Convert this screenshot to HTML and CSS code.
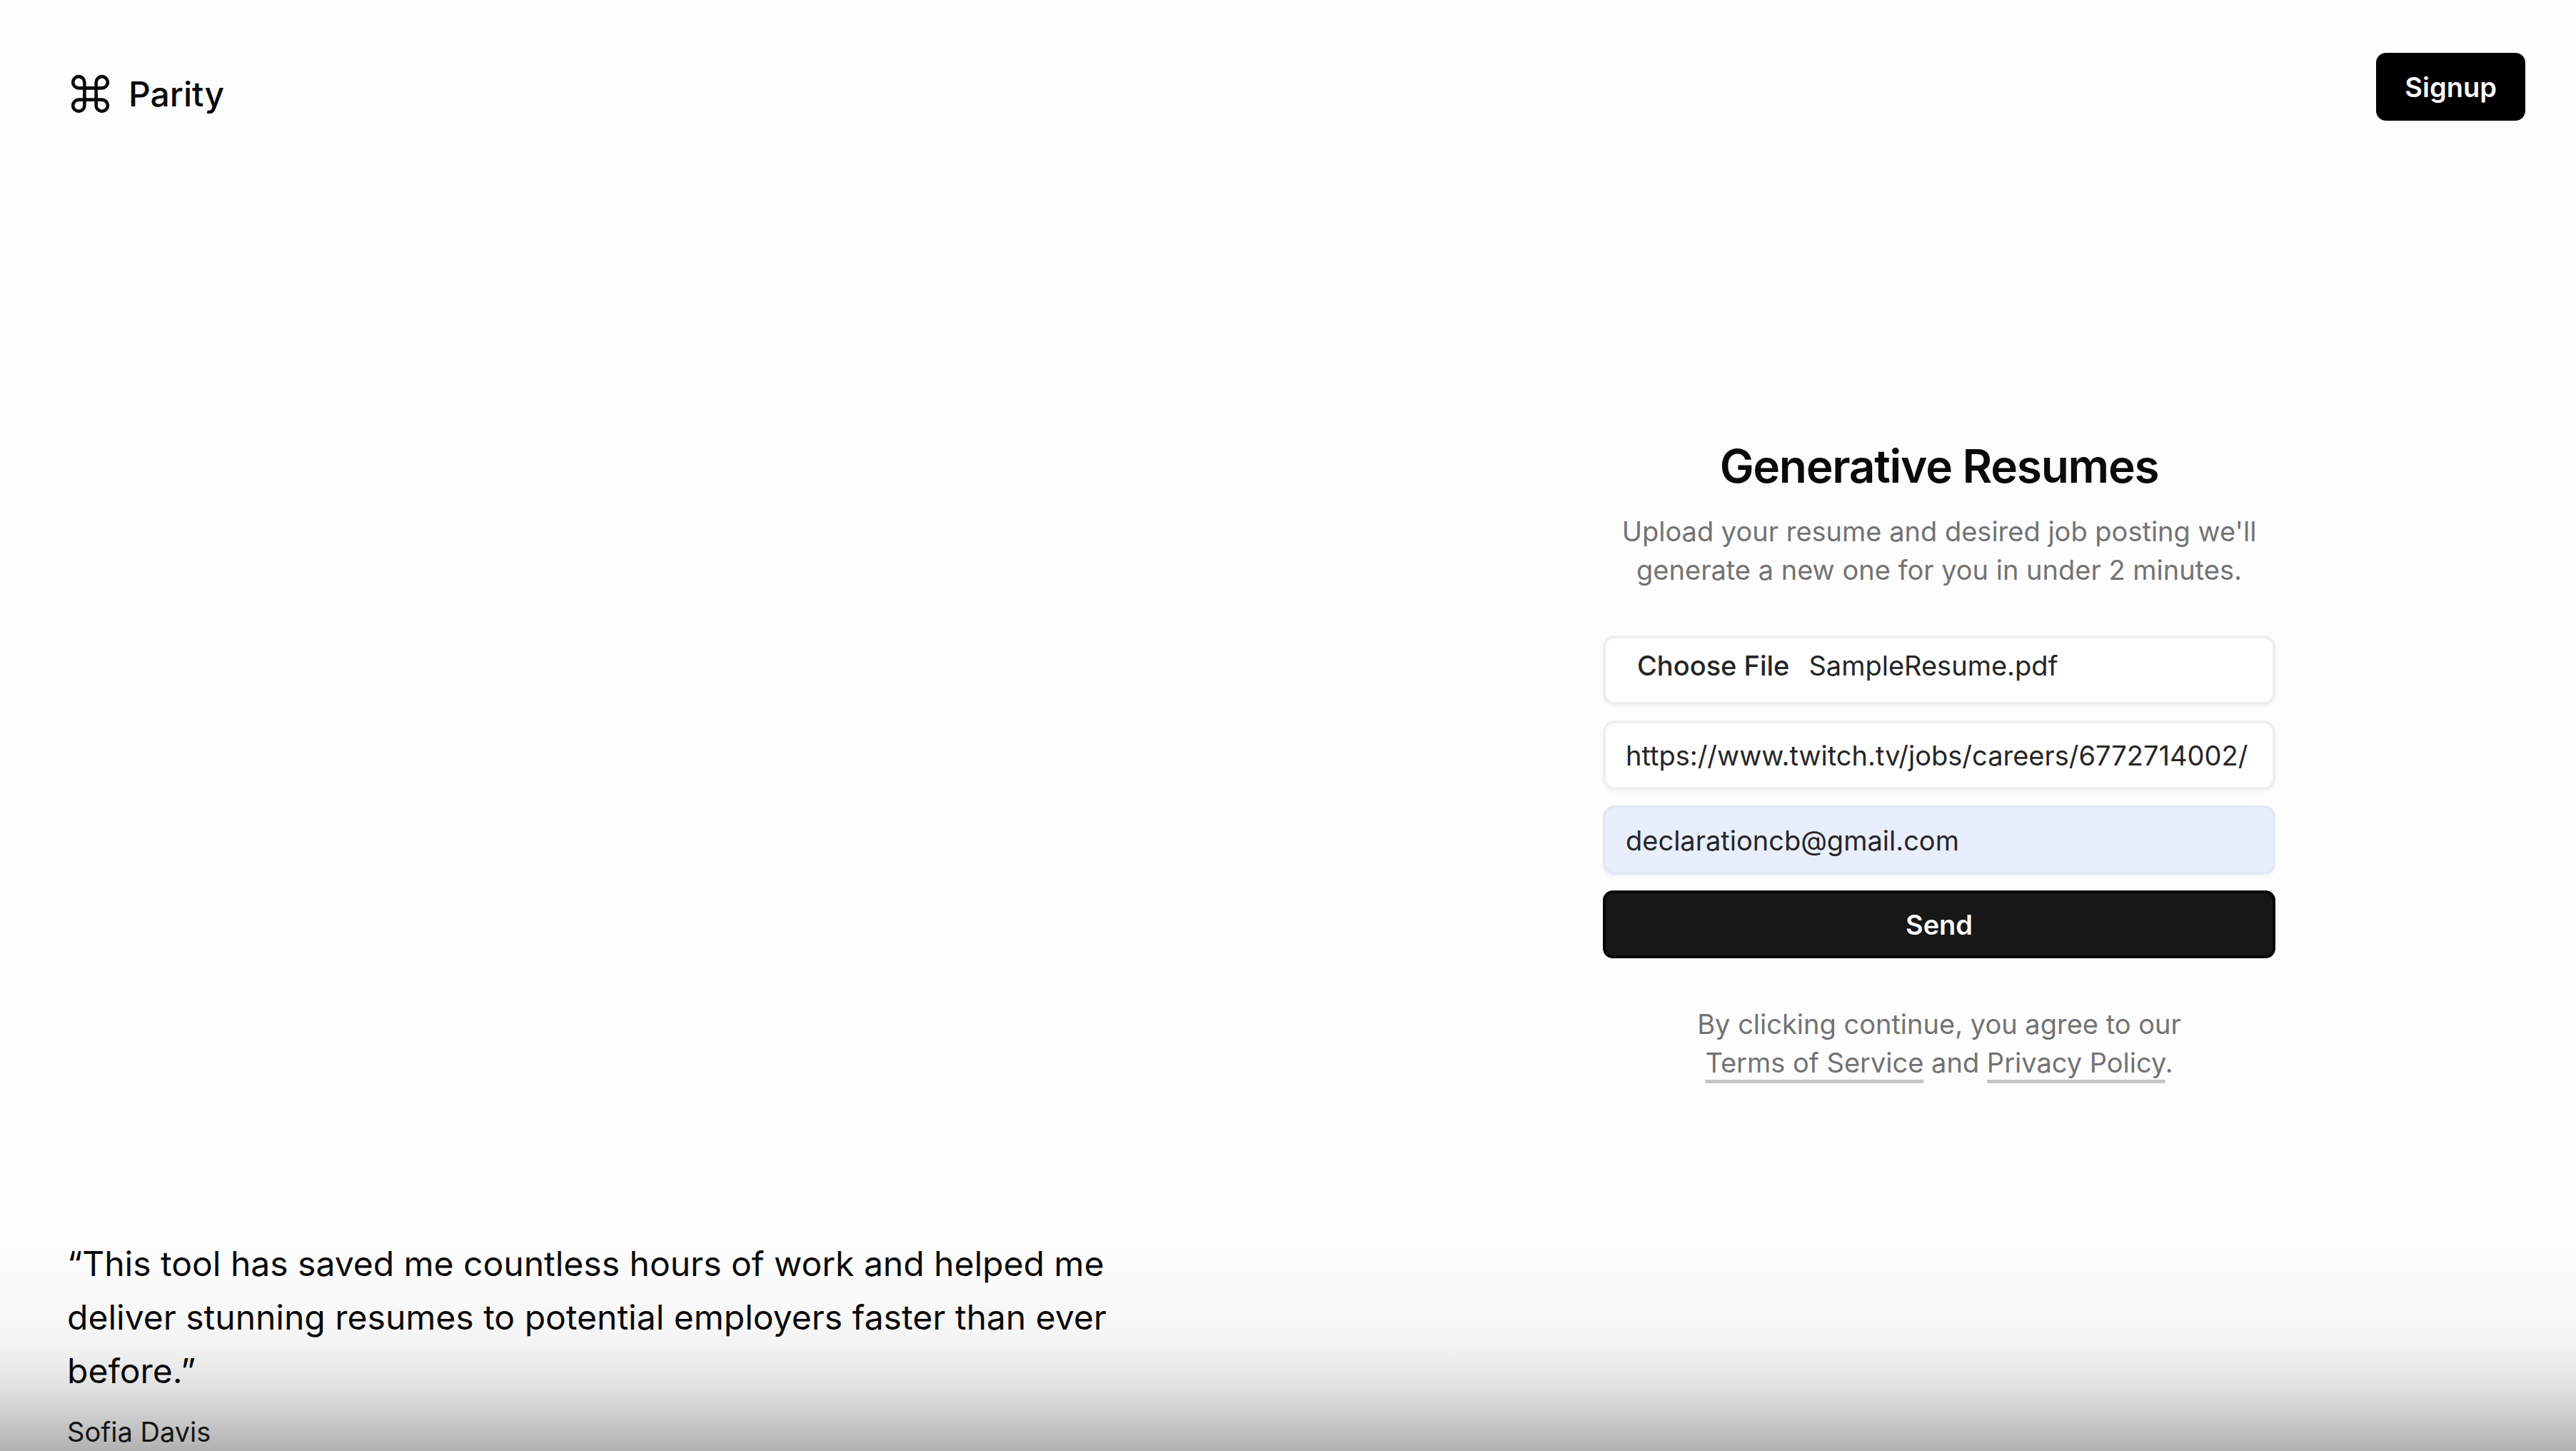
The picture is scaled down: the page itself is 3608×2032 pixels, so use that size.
FILE: index.html
```html
<!DOCTYPE html>
<html lang="en">
<head>
<meta charset="utf-8">
<title>Parity – Generative Resumes</title>
<meta name="viewport" content="width=device-width, initial-scale=1">
<link rel="stylesheet" href="styles.css">
</head>
<body>
<div class="page">
  <section class="intro">
    <a class="brand" href="#">
      <svg class="brand-icon" viewBox="0 0 24 24" fill="none" stroke="currentColor" stroke-width="1.7" stroke-linecap="round" stroke-linejoin="round" aria-hidden="true"><path d="M15 6v12a3 3 0 1 0 3-3H6a3 3 0 1 0 3 3V6a3 3 0 1 0-3 3h12a3 3 0 1 0-3-3"/></svg>
      Parity
    </a>
    <blockquote class="quote">
      <p class="quote-text">“This tool has saved me countless hours of work and helped me deliver stunning resumes to potential employers faster than ever before.”</p>
      <footer class="quote-author">Sofia Davis</footer>
    </blockquote>
  </section>
  <section class="panel">
    <nav class="panel-nav"><button class="button button-signup" type="button">Signup</button></nav>
    <main class="panel-main">
      <div class="content">
        <header class="heading">
          <h1 class="title">Generative Resumes</h1>
          <p class="muted">Upload your resume and desired job posting we'll generate a new one for you in under 2 minutes.</p>
        </header>
        <form class="form">
          <input class="field field-file" id="resume" type="file" aria-label="Resume">
          <input class="field" type="text" aria-label="Job posting link" value="https://www.twitch.tv/jobs/careers/6772714002/">
          <input class="field field-filled" type="email" aria-label="Email" value="declarationcb@gmail.com">
          <button class="button button-send" type="button">Send</button>
        </form>
        <p class="muted terms">By clicking continue, you agree to our <a class="link" href="#">Terms of Service</a> and <a class="link" href="#">Privacy Policy</a>.</p>
      </div>
    </main>
  </section>
</div>
<script src="script.js"></script>
</body>
</html>
```
FILE: styles.css
```css
* { box-sizing: border-box; }

body {
  margin: 0;
  background: #fdfdfd;
  color: #0a0a0a;
  font-family: Inter, "Liberation Sans", sans-serif;
  font-size: 38px;
  line-height: 54px;
}

h1, p, blockquote { margin: 0; }

.page {
  display: grid;
  grid-template-columns: 1824fr 1784fr;
  min-height: 100vh;
  position: relative;
}

/* Shade along the bottom edge */
.page::after {
  content: "";
  position: absolute;
  inset: auto 0 0;
  height: 300px;
  pointer-events: none;
  background: linear-gradient(
    rgba(0, 0, 0, 0) 0%,
    rgba(0, 0, 0, 0.01) 28%,
    rgba(0, 0, 0, 0.04) 50%,
    rgba(0, 0, 0, 0.09) 66%,
    rgba(0, 0, 0, 0.18) 82%,
    rgba(0, 0, 0, 0.3) 100%
  );
}

.intro {
  display: flex;
  flex-direction: column;
  justify-content: space-between;
  padding: 94px 94px 0;
}

.brand {
  display: flex;
  align-items: center;
  gap: 21px;
  color: inherit;
  font-size: 48px;
  font-weight: 500;
  line-height: 75px;
  text-decoration: none;
}

.brand-icon { width: 65px; height: 65px; }

.quote {
  display: flex;
  flex-direction: column;
  gap: 21px;
  max-width: 1536px;
}

.quote-text { font-size: 48px; line-height: 75px; }

.quote-author { color: #1c1c1c; }

.panel { display: flex; flex-direction: column; }

.panel-nav {
  display: flex;
  justify-content: flex-end;
  padding: 74px 71px 0;
}

.panel-main {
  flex: 1;
  display: flex;
  align-items: center;
  justify-content: center;
  padding-bottom: 76px;
}

.content {
  display: flex;
  flex-direction: column;
  gap: 65px;
  width: 100%;
  max-width: 942px;
}

.heading {
  display: flex;
  flex-direction: column;
  gap: 21px;
  text-align: center;
}

.title {
  font-size: 64px;
  font-weight: 600;
  line-height: 86px;
  letter-spacing: -0.02em;
}

.muted { color: #737373; }

.form { display: grid; gap: 22px; }

.field {
  width: 100%;
  height: 97px;
  padding: 11px 28px;
  border: 4px solid #efeff0;
  border-radius: 16px;
  background: #fefefe;
  box-shadow: 0 3px 5px rgba(0, 0, 0, 0.04);
  color: #262626;
  font: inherit;
}

.field-filled { background: #e8eefc; border-color: #e4e8f2; }

.field-file::file-selector-button {
  margin: 0 11px 0 0;
  padding: 0 16px;
  border: 0;
  background: transparent;
  color: inherit;
  font: inherit;
  font-weight: 500;
}

.button {
  height: 95px;
  padding: 0 40px;
  border: 0;
  border-radius: 14px;
  color: #fafafa;
  font: inherit;
  font-weight: 600;
}

.button-signup { background: #000; }

.button-send { background: #171717; border: 4px solid #050505; }

.terms { padding: 0 86px; text-align: center; }

.link {
  color: inherit;
  text-decoration: underline;
  text-decoration-color: #c6c6c6;
  text-decoration-thickness: 5px;
  text-decoration-skip-ink: none;
  text-underline-offset: 10px;
}
```
FILE: script.js
```js
// Start with the sample resume already chosen
const files = new DataTransfer();
files.items.add(new File(["resume"], "SampleResume.pdf", { type: "application/pdf" }));
document.getElementById("resume").files = files.files;
```
